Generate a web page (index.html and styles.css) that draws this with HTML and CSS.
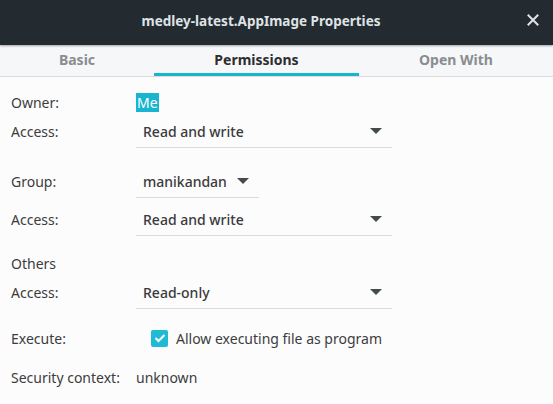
FILE: index.html
```html
<!DOCTYPE html>
<html>
<head>
<meta charset="utf-8">
<link rel="stylesheet" href="styles.css">
</head>
<body>
<div class="window">
  <header class="titlebar">
    <span class="title">medley-latest.AppImage Properties</span>
    <svg class="close" width="12" height="12" viewBox="0 0 12 12"><path d="M1.5 1.5 L10.5 10.5 M10.5 1.5 L1.5 10.5" stroke="#dfe3e6" stroke-width="2" stroke-linecap="square"/></svg>
  </header>
  <nav class="tabs">
    <div class="tab">Basic</div>
    <div class="tab active">Permissions</div>
    <div class="tab">Open With</div>
  </nav>
  <main class="content">
    <div class="row r-owner"><span class="label">Owner:</span><span class="value"><span class="sel">Me</span></span></div>
    <div class="row r-access1"><span class="label">Access:</span><div class="combo wide"><span>Read and write</span><i class="arrow"></i></div></div>
    <div class="row r-group"><span class="label">Group:</span><div class="combo narrow"><span>manikandan</span><i class="arrow"></i></div></div>
    <div class="row r-access2"><span class="label">Access:</span><div class="combo wide"><span>Read and write</span><i class="arrow"></i></div></div>
    <div class="row r-others"><span class="label">Others</span></div>
    <div class="row r-access3"><span class="label">Access:</span><div class="combo wide"><span>Read-only</span><i class="arrow"></i></div></div>
    <div class="row r-exec"><span class="label">Execute:</span>
      <label class="check"><span class="box"><svg width="12" height="10" viewBox="0 0 12 10"><path d="M1.5 5 L4.5 8 L10.5 2" fill="none" stroke="#fff" stroke-width="2"/></svg></span>Allow executing file as program</label>
    </div>
    <div class="row r-sec"><span class="label">Security context:</span><span class="value">unknown</span></div>
  </main>
</div>
</body>
</html>
```
FILE: styles.css
```css
* { box-sizing: border-box; }
html, body { margin: 0; padding: 0; }
body {
  width: 553px; height: 404px; overflow: hidden;
  font-family: "Noto Sans", "Liberation Sans", sans-serif;
  font-size: 14px; color: #3c3c3c; background: #fcfcfd;
}
.window { display: flex; flex-direction: column; height: 404px; }
.titlebar {
  height: 45px; background: #232b30; flex: none;
  display: flex; align-items: center; justify-content: center;
  position: relative; box-shadow: 0 1px 2px rgba(0,0,0,0.35);
  z-index: 1; padding-bottom: 3px; padding-right: 31px;
}
.title { color: #dfe3e6; font-weight: bold; font-size: 13.5px; }
.close { position: absolute; right: 14px; top: 14px; }
.tabs {
  height: 32px; flex: none; display: grid;
  grid-template-columns: 154px 205px 194px;
  background: #f6f7f9; border-bottom: 1px solid #dcdcdc;
}
.tab {
  display: flex; align-items: center; justify-content: center;
  color: #8a8d8f; font-weight: bold; font-size: 14px; padding-bottom: 3px;
}
.tab.active { color: #2e2e2e; box-shadow: inset 0 -3px 0 #17b5cf; }
.content { padding: 0 0 0 11px; background: #fcfcfd; flex: 1; }
.row { display: flex; align-items: center; }
.label { width: 125px; flex: none; }
.value { color: #3c3c3c; }
.sel { background: #18b4d0; color: #fff; padding: 0 1px; }
.combo {
  display: flex; align-items: center; justify-content: space-between;
  height: 33px; padding: 0 10px 0 7px; border-bottom: 1px solid #dadada;
  font-weight: 500; color: #3a3a3a;
}
.combo.wide { width: 256px; }
.combo.narrow { width: 123px; }
.arrow {
  width: 0; height: 0;
  border-left: 6px solid transparent; border-right: 6px solid transparent;
  border-top: 6px solid #454a4d;
}
.r-owner { height: 20px; margin-top: 15px; }
.r-access1 { margin-top: 3px; }
.check { display: flex; align-items: center; margin-left: 15px; }
.box {
  width: 17px; height: 17px; background: #1fbad3; border-radius: 2px;
  display: flex; align-items: center; justify-content: center; margin-right: 8px;
}
.r-group { margin-top: 17px; }
.r-access2 { margin-top: 5px; }
.r-others { margin-top: 17px; height: 20px; }
.r-access3 { margin-top: 3px; }
.r-exec { margin-top: 19px; height: 20px; }
.r-sec { margin-top: 19px; height: 20px; }
```
